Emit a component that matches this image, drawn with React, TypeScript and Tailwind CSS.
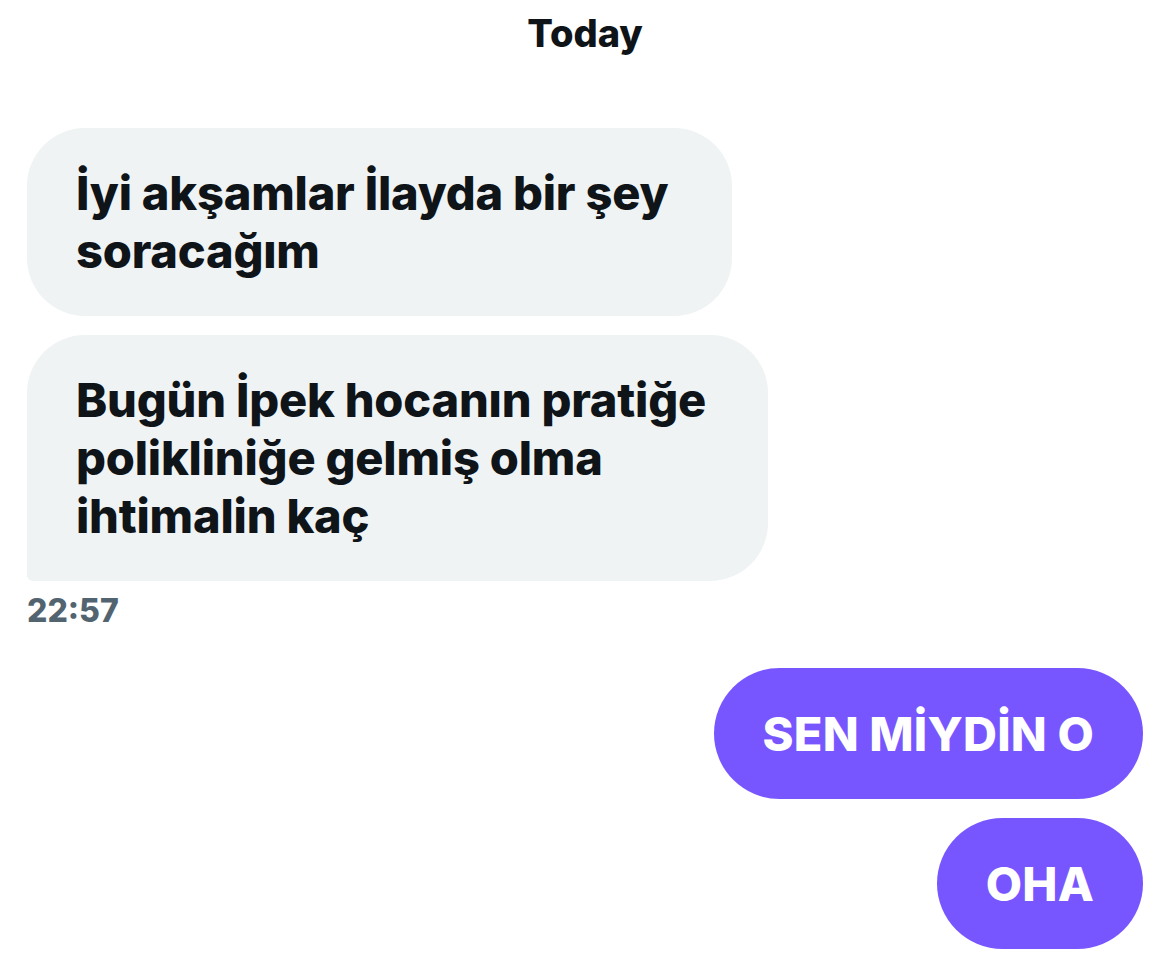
import React from "react";

const font = { fontFamily: "Inter, 'Noto Sans', sans-serif" };

function Received({ text, width, tail }: { text: string; width: string; tail?: boolean }) {
  return (
    <div
      className={`${width} bg-[#eff3f4] text-[#0f1419] rounded-[58px] ${
        tail ? "rounded-bl-[6px]" : ""
      } pl-[49px] pr-[30px] py-[36px] text-[47px] leading-[58px] font-extrabold tracking-[-0.2px]`}
    >
      {text}
    </div>
  );
}

function Sent({ text }: { text: string }) {
  return (
    <div className="self-end bg-[#7856ff] text-white rounded-full px-[49px] py-[36px] text-[47px] leading-[59px] font-extrabold tracking-[0.2px]">
      {text}
    </div>
  );
}

export default function App() {
  return (
    <div className="w-[1170px] h-[960px] bg-white overflow-hidden" style={font}>
      <div className="pt-[10px] text-center text-[38px] leading-[46px] font-extrabold text-[#0f1419]">
        Today
      </div>

      <div className="px-[27px] pt-[72px] flex flex-col">
        <div className="flex flex-col gap-[19px]">
          <Received width="w-[705px]" text="İyi akşamlar İlayda bir şey soracağım" />
          <Received width="w-[741px]" tail text="Bugün İpek hocanın pratiğe polikliniğe gelmiş olma ihtimalin kaç" />
        </div>
        <div className="mt-[10px] text-[32px] leading-[40px] font-extrabold text-[#536471]">22:57</div>

        <div className="mt-[37px] flex flex-col gap-[19px]">
          <Sent text="SEN MİYDİN O" />
          <Sent text="OHA" />
        </div>
      </div>
    </div>
  );
}
